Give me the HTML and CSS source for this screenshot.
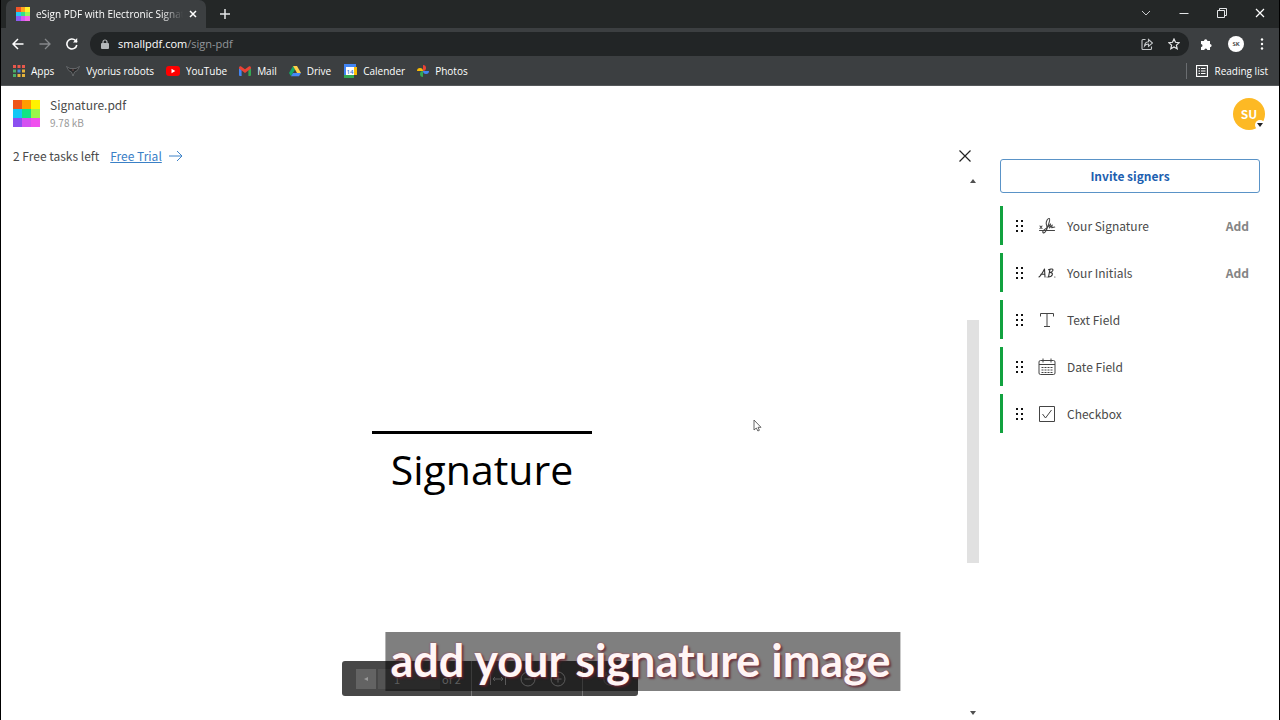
FILE: index.html
```html
<!DOCTYPE html>
<html lang="en">
<head>
<meta charset="utf-8">
<title>eSign PDF with Electronic Signature</title>
<link rel="stylesheet" href="styles.css">
</head>
<body>
<div class="browser">
  <div class="tabs">
    <div class="tab">
      <svg class="tab-icon" width="14" height="14" viewBox="0 0 3 3" shape-rendering="crispEdges"><path fill="#f0552a" d="M0 0h1v1H0z"/><path fill="#ffa51d" d="M1 0h1v1H1z"/><path fill="#fff12d" d="M2 0h1v1H2z"/><path fill="#22c9f5" d="M0 1h1v1H0z"/><path fill="#33e18b" d="M1 1h1v1H1z"/><path fill="#9cf35a" d="M2 1h1v1H2z"/><path fill="#8c5cf0" d="M0 2h1v1H0z"/><path fill="#d65af2" d="M1 2h1v1H1z"/><path fill="#f46be8" d="M2 2h1v1H2z"/></svg>
      <span class="tab-title">eSign PDF with Electronic Signature</span>
      <button class="plain" aria-label="Close tab"><svg width="8" height="8" viewBox="0 0 8 8" fill="none" stroke="#fff" stroke-width="1.5"><path d="M1 1l6 6M7 1L1 7"/></svg></button>
    </div>
    <button class="plain new-tab" aria-label="New tab"><svg width="10" height="10" viewBox="0 0 10 10" fill="none" stroke="#e4e6e8" stroke-width="1.5"><path d="M5 0v10M0 5h10"/></svg></button>
    <div class="window-buttons">
      <button class="plain" aria-label="Search tabs"><svg width="10" height="10" viewBox="0 0 10 10" fill="none" stroke="#c9cbcd"><path d="M1 3l4 4 4-4"/></svg></button>
      <button class="plain" aria-label="Minimize"><svg width="10" height="10" viewBox="0 0 10 10" stroke="#e4e6e8"><path d="M.5 5.500h9"/></svg></button>
      <button class="plain" aria-label="Restore"><svg width="10" height="10" viewBox="0 0 10 10" fill="none" stroke="#e4e6e8"><path d="M.5 2.500h7v7h-7zM2.500 2V.5h7v7H8"/></svg></button>
      <button class="plain" aria-label="Close window"><svg width="10" height="10" viewBox="0 0 10 10" fill="none" stroke="#fff" stroke-width="1.200"><path d="M1 1l8 8M9 1L1 9"/></svg></button>
    </div>
  </div>
  <div class="address-row">
    <button class="plain" aria-label="Back"><svg width="12" height="12" viewBox="0 0 12 12" fill="none" stroke="#fff" stroke-width="1.500"><path d="M11.500 6H1.500M6 1L1 6l5 5"/></svg></button>
    <button class="plain" aria-label="Forward"><svg width="12" height="12" viewBox="0 0 12 12" fill="none" stroke="#85888b" stroke-width="1.300"><path d="M.5 6h10M6 1l5 5-5 5"/></svg></button>
    <button class="plain" aria-label="Reload"><svg width="12" height="12" viewBox="0 0 12 12" fill="none" stroke="#fff" stroke-width="1.600"><path d="M10.800 7A5 5 0 1 1 9.500 2.500L11 4"/><path d="M11.200 0v4.500H7z" fill="#fff" stroke="none"/></svg></button>
    <div class="address">
      <svg width="8" height="10" viewBox="0 0 8 10"><rect y="4" width="8" height="6" rx="1" fill="#b4b7b9"/><path d="M2 4.500V3a2 2 0 0 1 4 0v1.500" fill="none" stroke="#b4b7b9" stroke-width="1.200"/></svg>
      <span class="url"><b>smallpdf.com</b>/sign-pdf</span>
      <button class="plain" aria-label="Share"><svg width="12" height="12" viewBox="0 0 12 12" fill="none" stroke="#c6c9cb" stroke-width="1.100"><path d="M4.500 1.500H2a1 1 0 0 0-1 1v8a1 1 0 0 0 1 1h7.500a1 1 0 0 0 1-1V8.500"/><path d="M3.500 8c.3-2.800 1.700-4 4-4.200V1.500l4 3.500-4 3.300V6C5.800 6 4.500 6.600 3.500 8z"/></svg></button>
      <button class="plain" aria-label="Bookmark"><svg width="12" height="12" viewBox="0 0 12 12" fill="none" stroke="#e6e8e9" stroke-width="1.200"><path d="M6 1l1.500 3.300 3.700.4-2.800 2.400.8 3.700L6 9l-3.200 1.800.8-3.700L.8 4.700l3.700-.4z"/></svg></button>
    </div>
    <div class="tools">
      <button class="plain" aria-label="Extensions"><svg width="12" height="12" viewBox="0 0 12 12" fill="#fff"><path d="M1 3h3a1.700 1.700 0 1 1 3.400 0H10v3a1.600 1.600 0 1 1 0 3.200V12H7.300a1.500 1.500 0 1 0-3 0H1V9a1.500 1.500 0 1 0 0-3z"/></svg></button>
      <button class="plain profile" aria-label="Profile SK">SK</button>
      <button class="plain" aria-label="Menu"><svg width="4" height="12" viewBox="0 0 4 12" fill="#fff"><circle cx="2" cy="1.500" r="1.200"/><circle cx="2" cy="6" r="1.200"/><circle cx="2" cy="10.500" r="1.200"/></svg></button>
    </div>
  </div>
  <nav class="bookmarks">
    <a href="#"><svg width="12" height="12" viewBox="0 0 12 12"><g fill="#e8584c"><path d="M0 0h3v3H0z"/><path d="M4.500 0h3v3h-3z"/><path d="M9 0h3v3H9z"/></g><g fill="#4caf67"><path d="M0 4.500h3v3H0zM0 9h3v3H0z"/></g><path fill="#4a87d8" d="M4.500 4.500h3v3h-3z"/><path fill="#e5b33b" d="M9 4.500h3v3H9zM4.500 9h3v3h-3zM9 9h3v3H9z"/></svg>Apps</a>
    <a href="#"><svg width="14" height="12" viewBox="0 0 14 12" fill="#292a2b" stroke="#777a7c" stroke-width=".7"><path d="M.5 1.500L4 3.500h6l3.500-2-2.200 4L8.500 7 7 11 5.500 7 2.700 5.500z"/><path stroke="#c9807b" d="M6.300 5h1.400"/></svg>Vyorius robots</a>
    <a href="#"><svg width="14" height="12" viewBox="0 0 14 12"><rect y="1" width="14" height="10" rx="3" fill="#f00"/><path d="M5.500 3.800L9.300 6 5.500 8.200z" fill="#fff"/></svg>YouTube</a>
    <a href="#"><svg width="12" height="12" viewBox="0 0 12 12"><path fill="#4285f4" d="M0 3l2.600 2v6H1a1 1 0 0 1-1-1z"/><path fill="#34a853" d="M12 3L9.400 5v6H11a1 1 0 0 0 1-1z"/><path fill="#ea4335" d="M0 3c0-1.700 1.500-2 2.500-1.300L6 4.300l3.500-2.600C10.500 1 12 1.300 12 3v.4L6 8 0 3.400z"/></svg>Mail</a>
    <a href="#"><svg width="12" height="12" viewBox="0 0 12 12"><path fill="#16a765" d="M4 1L0 8l2 3.300L6 4.500z"/><path fill="#ffcf48" d="M4 1h4l4 7H8z"/><path fill="#4688f4" d="M4 8h8l-2 3.300H2z"/></svg>Drive</a>
    <a href="#"><svg width="14" height="14" viewBox="0 0 14 14"><path fill="#4285f4" d="M1 0h12v3H1z"/><path fill="#4285f4" d="M1 0h3v13H1z"/><path fill="#fbbc04" d="M11 3h3v8h-3z"/><path fill="#34a853" d="M1 11h10v3H1z"/><path fill="#fff" d="M3 3h8v8H3z"/><text x="3.500" y="9.500" font-size="6" fill="#3672d8" font-weight="600" font-family="Open Sans, sans-serif">14</text></svg>Calender</a>
    <a href="#"><svg width="12" height="12" viewBox="0 0 12 12"><path fill="#ea4335" d="M6 6V0a3 3 0 0 1 0 6z"/><path fill="#4285f4" d="M6 6h6a3 3 0 0 1-6 0z"/><path fill="#34a853" d="M6 6v6a3 3 0 0 1 0-6z"/><path fill="#fbbc04" d="M6 6H0a3 3 0 0 1 6 0z"/></svg>Photos</a>
    <a href="#" class="reading"><svg width="12" height="12" viewBox="0 0 12 12" fill="none" stroke="#fff"><rect x=".5" y=".5" width="11" height="11" stroke-width="1.200"/><path d="M2.500 3.500H4M5 3.500h4.500M2.500 6H4M5 6h4.500M2.500 8.500H4M5 8.500h4.500"/></svg>Reading list</a>
  </nav>
</div>

<header class="app-header">
  <svg width="27" height="27" viewBox="0 0 3 3" shape-rendering="crispEdges"><path fill="#f0561a" d="M0 0h1v1H0z"/><path fill="#ff9d00" d="M1 0h1v1H1z"/><path fill="#fff200" d="M2 0h1v1H2z"/><path fill="#13c8f5" d="M0 1h1v1H0z"/><path fill="#10e584" d="M1 1h1v1H1z"/><path fill="#9af64c" d="M2 1h1v1H2z"/><path fill="#8b4ff0" d="M0 2h1v1H0z"/><path fill="#d451f1" d="M1 2h1v1H1z"/><path fill="#f050ee" d="M2 2h1v1H2z"/></svg>
  <div class="file">
    <div class="file-name">Signature.pdf</div>
    <div class="file-size">9.78 kB</div>
  </div>
  <button class="plain avatar" aria-label="Account SU">SU<span class="avatar-menu"><svg width="6" height="4" viewBox="0 0 6 4"><path d="M0 0h6L3 4z" fill="#222"/></svg></span></button>
</header>

<main class="workspace">
  <section class="viewer">
    <div class="viewer-bar">
      <span>2 Free tasks left</span>
      <a href="#" class="trial"><span>Free Trial</span><svg width="14" height="12" viewBox="0 0 14 12" fill="none" stroke="#3f83c8"><path d="M0 6h13M8 1l5 5-5 5"/></svg></a>
      <button class="plain close" aria-label="Close"><svg width="12" height="12" viewBox="0 0 12 12" fill="none" stroke="#222" stroke-width="1.200"><path d="M.5.5l11 11M11.500.5l-11 11"/></svg></button>
    </div>
    <div class="pane">
      <div class="document"><div class="sign-line">Signature</div></div>
      <div class="scrollbar">
        <svg width="6" height="4" viewBox="0 0 6 4"><path d="M0 4h6L3 0z" fill="#505050"/></svg>
        <div class="track"><div class="thumb"></div></div>
        <svg width="6" height="4" viewBox="0 0 6 4"><path d="M0 0h6L3 4z" fill="#505050"/></svg>
      </div>
    </div>
    <div class="pager">
      <div class="pager-group">
        <button class="plain step" aria-label="Previous page"><svg width="4" height="4" viewBox="0 0 4 4"><path d="M0 2l4-2v4z" fill="#999"/></svg></button>
        <input class="page-number" aria-label="Page" value="1">
        <span>of 2</span>
      </div>
      <div class="pager-group zoom">
        <button class="plain" aria-label="Fit width"><svg width="16" height="16" viewBox="0 0 16 16" fill="none" stroke="#b5b5b5"><path d="M.5 2v12M15.500 2v12M3 8h10M5 6L3 8l2 2M11 6l2 2-2 2"/></svg></button>
        <button class="plain" aria-label="Zoom out"><svg width="16" height="16" viewBox="0 0 16 16" fill="none" stroke="#b5b5b5"><circle cx="8" cy="8" r="7"/><path d="M4.500 8h7"/></svg></button>
        <button class="plain" aria-label="Zoom in"><svg width="16" height="16" viewBox="0 0 16 16" fill="none" stroke="#b5b5b5"><circle cx="8" cy="8" r="7"/><path d="M4.500 8h7M8 4.500v7"/></svg></button>
      </div>
      <div class="pager-group last">
        <button class="plain" aria-label="Rotate"><svg width="14" height="14" viewBox="0 0 14 14" fill="none" stroke="#777"><path d="M3 2.500A6 6 0 1 0 9 1.500M3 0v3h3"/></svg></button>
      </div>
    </div>
    <svg class="pointer" width="9" height="13" viewBox="0 0 9 13"><path d="M1 1v10l2.300-2 1.600 3 1.500-.7L5 8.300h3z" fill="#fff" stroke="#555" stroke-width=".9"/></svg>
  </section>

  <aside class="sidebar">
    <button class="invite">Invite signers</button>
    <ul class="fields">
      <li class="field">
        <svg class="grip" width="8" height="12" viewBox="0 0 8 12"><path d="M0 0h2v2H0zM5 0h2v2H5zM0 5h2v2H0zM5 5h2v2H5zM0 10h2v2H0zM5 10h2v2H5z"/></svg>
        <svg width="18" height="18" viewBox="0 0 18 18" fill="none" stroke="#444" stroke-width="1.100" stroke-linecap="round" stroke-linejoin="round"><path d="M2 9l2 2.500M4 9l-2 2.500M1.500 13.500h15M5 15.500c1.500 1.500 3.500-2 5-6.500 1.200-3.500 2.500-7 1.300-7.500C9.800 1 8 4.500 8.200 6.500c.2 1.500 1 2 .7 4.500-.3 3-2.400 5.500-3.900 4.500-1.200-1.200 2-3.500 4.500-5L12.500 7l-1 4 2.700-3-.5 2.700 3-.7"/></svg>
        <span>Your Signature</span><button class="plain add">Add</button>
      </li>
      <li class="field">
        <svg class="grip" width="8" height="12" viewBox="0 0 8 12"><path d="M0 0h2v2H0zM5 0h2v2H5zM0 5h2v2H0zM5 5h2v2H5zM0 10h2v2H0zM5 10h2v2H5z"/></svg>
        <svg width="18" height="18" viewBox="0 0 18 18" fill="none" stroke="#333" stroke-width="1.100" stroke-linecap="round" stroke-linejoin="round"><path d="M1 13c2-1.500 4-5 5.500-8l.5 8M2.800 10.200h4M9 13h.1M12 5l-1.500 8M10.500 5.800c3-1.500 5-.8 4.300.8-.5 1.200-2 1.700-3.200 1.900 2-.2 3.200.7 2.700 2.200-.5 1.700-2.500 2.300-4 2.300M16.800 13h.1"/></svg>
        <span>Your Initials</span><button class="plain add">Add</button>
      </li>
      <li class="field">
        <svg class="grip" width="8" height="12" viewBox="0 0 8 12"><path d="M0 0h2v2H0zM5 0h2v2H5zM0 5h2v2H0zM5 5h2v2H5zM0 10h2v2H0zM5 10h2v2H5z"/></svg>
        <svg width="18" height="18" viewBox="0 0 18 18" fill="none" stroke="#444"><path d="M2.500 5.500v-3h13v3M9 2.500v13M6 15.500h6"/></svg>
        <span>Text Field</span>
      </li>
      <li class="field">
        <svg class="grip" width="8" height="12" viewBox="0 0 8 12"><path d="M0 0h2v2H0zM5 0h2v2H5zM0 5h2v2H0zM5 5h2v2H5zM0 10h2v2H0zM5 10h2v2H5z"/></svg>
        <svg width="18" height="18" viewBox="0 0 18 18" fill="none" stroke="#444"><rect x="1" y="2.500" width="16" height="14" rx="1.500"/><path d="M1 6.500h16M5 .5v4M13 .5v4"/><path d="M3.500 9.500h11M3.500 12h11M3.500 14.500h11" stroke-dasharray="2 1"/></svg>
        <span>Date Field</span>
      </li>
      <li class="field">
        <svg class="grip" width="8" height="12" viewBox="0 0 8 12"><path d="M0 0h2v2H0zM5 0h2v2H5zM0 5h2v2H0zM5 5h2v2H5zM0 10h2v2H0zM5 10h2v2H5z"/></svg>
        <svg width="18" height="18" viewBox="0 0 18 18" fill="none" stroke="#444"><path d="M1.500 1.500h15v15h-15z"/><path d="M4.500 9l3 4 6-8"/></svg>
        <span>Checkbox</span>
      </li>
    </ul>
  </aside>
</main>
<div class="caption">add your signature image</div>
</body>
</html>
```
FILE: styles.css
```css
* { box-sizing: border-box; }
body {
  margin: 0;
  min-height: 100vh;
  display: flex;
  flex-direction: column;
  position: relative;
  overflow: hidden;
  background: #fff;
  border: solid #000;
  border-width: 0 1px;
  font: 400 12px/18px "Noto Sans CJK SC", sans-serif;
  color: #4a4a4a;
}
svg { display: block; flex: none; }
.plain {
  padding: 0;
  border: 0;
  background: none;
  font: inherit;
  color: inherit;
  display: flex;
  align-items: center;
  justify-content: center;
}
.browser {
  background: #3c3f41;
  color: #fff;
  font: 11px/16px "Open Sans", "Noto Sans", sans-serif;
  border-bottom: 1px solid #55585a;
}
.tabs {
  height: 28px;
  display: flex;
  align-items: stretch;
  background: #242727;
}
.tab {
  width: 200px;
  margin-left: 5px;
  padding: 0 9px 0 10px;
  display: flex;
  align-items: center;
  gap: 6px;
  background: #3c3f41;
  border-radius: 7px 7px 0 0;
  font-size: 10px;
}
.tab-title {
  flex: 1;
  min-width: 0;
  white-space: nowrap;
  overflow: hidden;
  mask-image: linear-gradient(to right, #000 85%, transparent);
}
.new-tab { margin-left: 14px; }
.window-buttons {
  margin-left: auto;
  padding: 0 14px 3px 0;
  display: flex;
  align-items: center;
  gap: 28px;
}
.address-row {
  height: 31px;
  padding: 0 15px 0 11px;
  display: flex;
  align-items: center;
  gap: 15px;
}
.address {
  flex: 1;
  height: 24px;
  margin-left: -3px;
  padding: 0 9px 0 11px;
  display: flex;
  align-items: center;
  gap: 15px;
  border-radius: 12px;
  background: #222526;
}
.url { flex: 1; margin-left: -6px; color: #92969a; }
.url b { font-weight: 400; color: #fff; }
.tools { display: flex; align-items: center; gap: 16px; margin-left: -4px; }
.profile {
  width: 16px;
  height: 16px;
  border-radius: 50%;
  background: #fff;
  color: #222;
  font-size: 6px;
  font-weight: 600;
}
.bookmarks {
  height: 26px;
  padding: 0 11px 3px 12px;
  display: flex;
  align-items: center;
  gap: 12px;
  font-size: 10px;
}
.bookmarks a {
  display: flex;
  align-items: center;
  gap: 6px;
  color: #fff;
  text-decoration: none;
}
.bookmarks .reading {
  margin-left: auto;
  padding-left: 9px;
  border-left: 1px solid #6a6d70;
}
.app-header {
  height: 55px;
  padding: 0 14px 0 12px;
  display: flex;
  align-items: center;
  gap: 10px;
}
.file-size { font-size: 10px; color: #999; }
.avatar {
  width: 32px;
  height: 32px;
  margin-left: auto;
  position: relative;
  border-radius: 50%;
  background: #fdb924;
  color: #fff;
  font-weight: 700;
}
.avatar-menu {
  position: absolute;
  right: 0;
  bottom: 0;
  width: 10px;
  height: 10px;
  display: flex;
  align-items: center;
  justify-content: center;
  border-radius: 50%;
  background: #fff;
}
.workspace { flex: 1; display: flex; gap: 21px; }
.viewer {
  flex: 1;
  position: relative;
  display: flex;
  flex-direction: column;
}
.viewer-bar {
  height: 33px;
  padding: 0 8px 3px 12px;
  display: flex;
  align-items: center;
  gap: 11px;
}
.trial {
  display: flex;
  align-items: center;
  gap: 7px;
  color: #3a80c6;
  text-decoration: none;
}
.trial span { text-decoration: underline; }
.close { margin-left: auto; }
.pane { flex: 1; display: flex; }
.document { flex: 1; padding: 257px 4px 0 0; }
.sign-line {
  width: 220px;
  margin: 0 auto;
  padding-top: 7px;
  border-top: 3px solid #000;
  color: #000;
  font: 41px/56px "Open Sans", sans-serif;
  text-align: center;
}
.scrollbar {
  width: 12px;
  padding: 5px 0;
  display: flex;
  flex-direction: column;
  align-items: center;
}
.track { flex: 1; width: 100%; padding-top: 137px; }
.thumb { height: 243px; background: #e1e1e1; }
.pager {
  position: absolute;
  left: 50%;
  bottom: 24px;
  width: 296px;
  height: 35px;
  transform: translateX(-50%);
  display: flex;
  border-radius: 3px;
  background: #474747;
  color: #bbb;
  font-size: 11px;
}
.pager-group {
  flex: 1;
  display: flex;
  align-items: center;
  gap: 2px;
  padding-left: 14px;
  border-right: 1px solid #777;
}
.zoom { gap: 14px; padding-left: 18px; }
.zoom, .last { flex: none; width: 111px; }
.last { width: 55px; padding-left: 20px; border: 0; }
.step { width: 20px; height: 20px; background: #636363; }
.page-number {
  width: 62px;
  height: 20px;
  border: 0;
  padding: 0 16px;
  background: #545454;
  color: inherit;
  font: inherit;
}
.pointer { position: absolute; left: 752px; top: 278px; }
.sidebar { width: 279px; padding: 18px 19px 0 0; }
.invite {
  width: 100%;
  height: 34px;
  border: 1px solid #5a93c7;
  border-radius: 3px;
  background: #fff;
  color: #1d5fb0;
  font: inherit;
  font-weight: 700;
}
.fields {
  list-style: none;
  margin: 13px 0 0;
  padding: 0;
  display: grid;
  gap: 8px;
}
.field {
  height: 39px;
  padding: 0 11px 0 13px;
  display: flex;
  align-items: center;
  gap: 11px;
  border-left: 3px solid #12a23f;
}
.grip { margin-right: 3px; fill: #111; }
.add { margin-left: auto; font-weight: 700; color: #848484; }
.caption {
  position: absolute;
  left: 50%;
  bottom: 29px;
  transform: translateX(-50%);
  padding: 0 10px 3px 5px;
  margin-left: 3px;
  background: rgba(0, 0, 0, .5);
  color: #fff5f5;
  font: 700 45px/56px Lato, sans-serif;
  white-space: nowrap;
  text-shadow: 0 0 2px #a33c4c, 2px 2px 2px rgba(90, 30, 40, .7);
}
```
